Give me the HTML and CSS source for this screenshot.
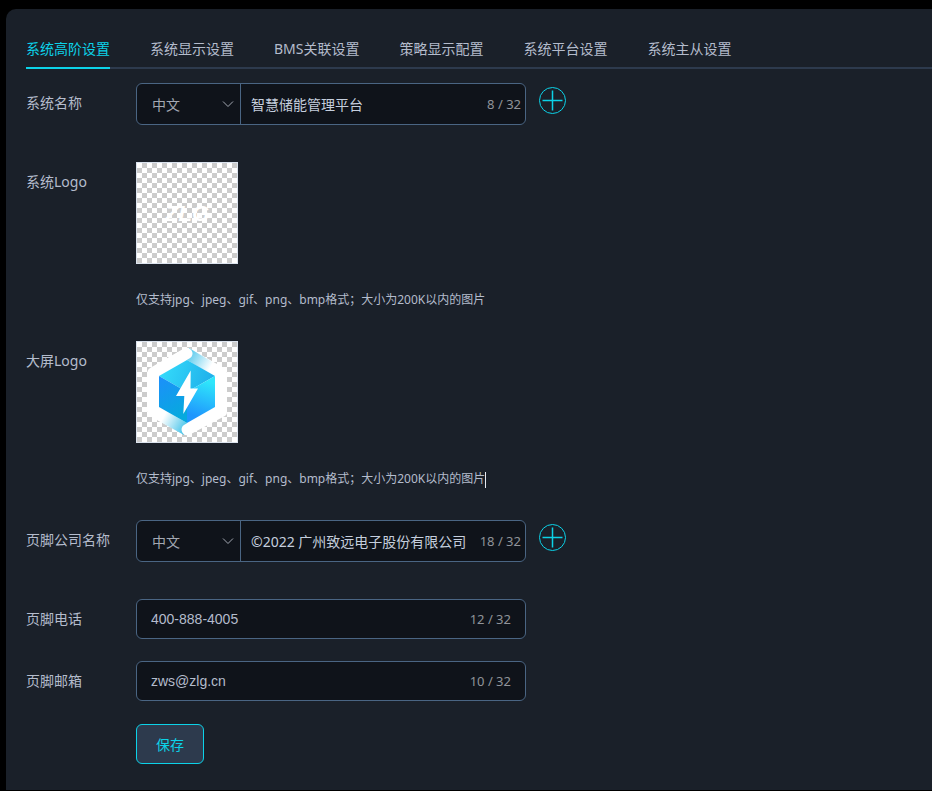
FILE: index.html
```html
<!DOCTYPE html>
<html lang="zh-CN">
<head>
  <meta charset="UTF-8">
  <meta name="viewport" content="width=device-width, initial-scale=1.0">
  <title>系统高阶设置</title>
  <link rel="stylesheet" href="styles.css">
</head>
<body>

  <main class="panel">
    <nav class="tabs">
      <a href="#advanced" class="tab active">系统高阶设置</a>
      <a href="#display" class="tab">系统显示设置</a>
      <a href="#bms" class="tab">BMS关联设置</a>
      <a href="#strategy" class="tab">策略显示配置</a>
      <a href="#platform" class="tab">系统平台设置</a>
      <a href="#master" class="tab">系统主从设置</a>
    </nav>

    <form class="form">
      <!-- 系统名称 -->
      <div class="form-row lang-row">
        <label class="form-label" for="sys-name">系统名称</label>
        <div class="input-box group">
          <div class="select-wrap">
            <select class="lang-select" aria-label="系统名称语言">
              <option>中文</option>
            </select>
            <svg class="arrow" viewBox="0 0 12 8"><path d="M1 1.5l5 5 5-5"/></svg>
          </div>
          <input type="text" id="sys-name" class="text-input" value="智慧储能管理平台">
          <span class="count">8 / 32</span>
        </div>
        <button type="button" class="add-button" aria-label="添加">
          <svg viewBox="0 0 27 27"><circle cx="13.5" cy="13.5" r="13"/><path d="M13.5 3.5v20M3.5 13.5h20"/></svg>
        </button>
      </div>

      <!-- 系统Logo -->
      <div class="form-row logo-row">
        <span class="form-label">系统Logo</span>
        <div class="upload">
          <button type="button" class="logo-box" aria-label="上传系统Logo">
            <svg viewBox="0 0 100 100">
              <text class="logo-text" x="50" y="58" text-anchor="middle">ZLG</text>
            </svg>
          </button>
          <p class="hint">仅支持jpg、jpeg、gif、png、bmp格式；大小为200K以内的图片</p>
        </div>
      </div>

      <!-- 大屏Logo -->
      <div class="form-row logo-row">
        <span class="form-label">大屏Logo</span>
        <div class="upload">
          <button type="button" class="logo-box" aria-label="上传大屏Logo">
            <svg viewBox="0 0 100 100">
              <defs>
                <linearGradient id="top" x1="0" y1="0.3" x2="1" y2="0.5">
                  <stop offset="0" stop-color="#35dcfb"/>
                  <stop offset="1" stop-color="#1fafea"/>
                </linearGradient>
                <linearGradient id="left" x1="0" y1="0" x2="0.4" y2="1">
                  <stop offset="0" stop-color="#1d8ffb"/>
                  <stop offset="1" stop-color="#06a9de"/>
                </linearGradient>
                <linearGradient id="right" x1="0.7" y1="0" x2="0.5" y2="1">
                  <stop offset="0.1" stop-color="#2fe6fb"/>
                  <stop offset="0.9" stop-color="#1f96fd"/>
                </linearGradient>
                <linearGradient id="band-top" gradientUnits="userSpaceOnUse" x1="52" y1="14" x2="73" y2="26">
                  <stop offset="0" stop-color="#62cdee"/>
                  <stop offset="1" stop-color="#fff"/>
                </linearGradient>
                <linearGradient id="band-bottom" gradientUnits="userSpaceOnUse" x1="48" y1="86" x2="27" y2="74">
                  <stop offset="0" stop-color="#4fc6ea"/>
                  <stop offset="1" stop-color="#fff"/>
                </linearGradient>
              </defs>
              <path fill="#fff" d="M47 6.5Q50 5 53 6.5L87 26Q90 28 90 31V70Q90 73 87 74.5L53 92.5Q50 94 47 92.5L13 74Q10 72 10 69V31Q10 28 13 26Z"/>
              <path fill="url(#band-top)" d="M52 6L78 21.5L72 31L50 18Z"/>
              <path fill="url(#band-bottom)" d="M50 81L28 68.5L20 78L47 93Z"/>
              <path class="arm" d="M50 11.5L22 27.5M50 87.5L78 72"/>
              <path fill="url(#top)" d="M50 18L78 34L50 50L22 34Z"/>
              <path fill="url(#left)" d="M22 34L50 50V81L22 65Z"/>
              <path fill="url(#right)" d="M78 34L50 50V81L78 65Z"/>
              <path fill="#fff" d="M53.7 28.5L39 54H47.3L46.3 72L61 46.5H53.5Z"/>
            </svg>
          </button>
          <p class="hint">仅支持jpg、jpeg、gif、png、bmp格式；大小为200K以内的图片<span class="caret"></span></p>
        </div>
      </div>

      <!-- 页脚信息 -->
      <div class="form-row lang-row">
        <label class="form-label" for="company">页脚公司名称</label>
        <div class="input-box group">
          <div class="select-wrap">
            <select class="lang-select" aria-label="页脚公司名称语言">
              <option>中文</option>
            </select>
            <svg class="arrow" viewBox="0 0 12 8"><path d="M1 1.5l5 5 5-5"/></svg>
          </div>
          <input type="text" id="company" class="text-input" value="©2022 广州致远电子股份有限公司">
          <span class="count">18 / 32</span>
        </div>
        <button type="button" class="add-button" aria-label="添加">
          <svg viewBox="0 0 27 27"><circle cx="13.5" cy="13.5" r="13"/><path d="M13.5 3.5v20M3.5 13.5h20"/></svg>
        </button>
      </div>

      <div class="form-row">
        <label class="form-label" for="phone">页脚电话</label>
        <div class="input-box single">
          <input type="text" id="phone" class="text-input" value="400-888-4005">
          <span class="count">12 / 32</span>
        </div>
      </div>

      <div class="form-row">
        <label class="form-label" for="email">页脚邮箱</label>
        <div class="input-box single">
          <input type="text" id="email" class="text-input" value="zws@zlg.cn">
          <span class="count">10 / 32</span>
        </div>
      </div>

      <div class="form-actions">
        <button type="button" class="save-button">保存</button>
      </div>
    </form>
  </main>

</body>
</html>
```

FILE: styles.css
```css
* {
  box-sizing: border-box;
}

body {
  margin: 0;
  padding: 9px 0 1px 6px;
  background-color: #000;
  color: #b4bccc;
  font-family: "Noto Sans", "Noto Sans CJK SC", sans-serif;
  font-size: 14px;
}

.panel {
  padding: 20px 0 26px 20px;
  background-color: #1a2029;
  border-radius: 10px 0 0 0;
}

/* 顶部标签页 */
.tabs {
  display: flex;
  gap: 40px;
  border-bottom: 2px solid #2d3a4d;
}

.tab {
  height: 40px;
  margin-bottom: -2px;
  line-height: 40px;
  color: #b4bccc;
  text-decoration: none;
  white-space: nowrap;
}

.tab.active {
  color: #0cd2e8;
  border-bottom: 2px solid #0cd2e8;
}

/* 表单 */
.form {
  padding-top: 14px;
}

.form-row {
  display: flex;
  align-items: flex-start;
  margin-bottom: 22px;
}

.lang-row {
  margin-bottom: 37px;
}

.logo-row {
  margin-bottom: 31px;
}

.form-label {
  flex: 0 0 110px;
  line-height: 40px;
}

.input-box {
  display: flex;
  align-items: center;
  width: 390px;
  height: 40px;
  background-color: #0f131a;
  border: 1px solid #4a6583;
  border-radius: 6px;
}

.input-box.group {
  height: 42px;
  padding-right: 4px;
}

.input-box.single {
  padding: 0 14px;
}

.text-input {
  flex: 1;
  min-width: 0;
  height: 100%;
  padding: 0;
  border: none;
  outline: none;
  background: transparent;
  color: #b4bccc;
  font-family: "Liberation Sans", "Noto Sans CJK SC", sans-serif;
  font-size: 14px;
}

.group .text-input {
  padding-left: 10px;
  color: #c5cedd;
  font-family: "Noto Sans", "Noto Sans CJK SC", sans-serif;
}

.count {
  color: #909399;
  font-size: 13px;
  white-space: nowrap;
}

.select-wrap {
  position: relative;
  flex: 0 0 104px;
  height: 100%;
  border-right: 1px solid #4a6583;
}

.lang-select {
  width: 100%;
  height: 100%;
  padding: 0 30px 0 15px;
  border: none;
  outline: none;
  appearance: none;
  background: transparent;
  color: #a3a8b2;
  font-family: inherit;
  font-size: 14px;
}

.arrow {
  position: absolute;
  top: 16px;
  right: 6px;
  width: 12px;
  height: 8px;
  fill: none;
  stroke: #a3a8b2;
  pointer-events: none;
}

.add-button {
  width: 27px;
  height: 27px;
  margin: 4px 0 0 13px;
  padding: 0;
  border: none;
  background: none;
  cursor: pointer;
}

.add-button svg {
  display: block;
  fill: none;
  stroke: #0cd2e8;
}

.add-button path {
  stroke-width: 1.5px;
}

/* Logo 上传 */
.logo-box {
  display: block;
  width: 102px;
  height: 102px;
  padding: 0;
  border: 1px solid #dbe3ee;
  background: repeating-conic-gradient(#ccc 0 25%, #fff 0 50%) 0 0 / 10px 10px;
  cursor: pointer;
}

.logo-box svg {
  display: block;
}

.logo-text {
  fill: #fff;
  font-family: "Liberation Sans", sans-serif;
  font-size: 22px;
  font-style: italic;
  font-weight: bold;
}

.arm {
  fill: none;
  stroke: #fff;
  stroke-width: 11px;
  stroke-linecap: round;
}

.hint {
  margin: 26px 0 0;
  font-size: 12px;
  line-height: 20px;
}

.caret {
  display: inline-block;
  width: 1px;
  height: 16px;
  background-color: #e5eaf2;
  vertical-align: middle;
}

/* 保存按钮 */
.form-actions {
  padding: 1px 0 0 110px;
}

.save-button {
  width: 68px;
  height: 40px;
  padding: 0;
  border: 1px solid #0cd2e8;
  border-radius: 6px;
  background-color: #2d3a4d;
  color: #0cd2e8;
  font-family: inherit;
  font-size: 14px;
  cursor: pointer;
}
```
